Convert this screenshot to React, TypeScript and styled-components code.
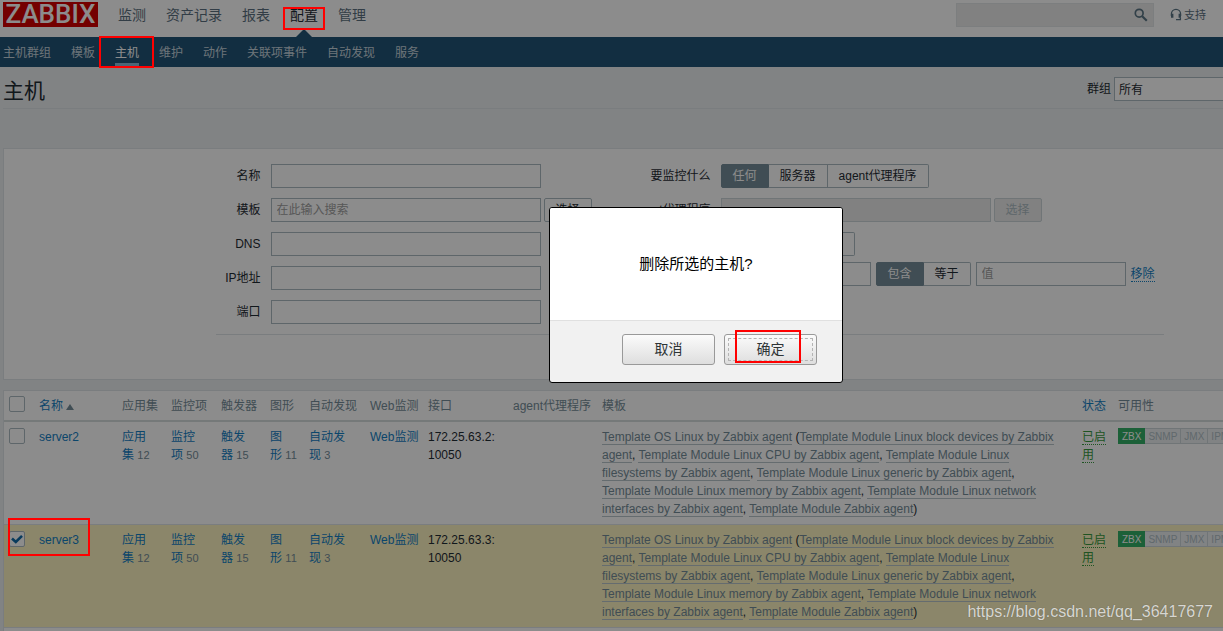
import React from "react";
import styled, { createGlobalStyle } from "styled-components";

const GlobalStyle = createGlobalStyle`
  * { box-sizing: border-box; }
  body {
    margin: 0;
    background: #ebeef0;
    color: #1f2c33;
    font: 12px/18px "Liberation Sans", "Noto Sans CJK SC", sans-serif;
  }
  input, button, select { font: inherit; color: inherit; margin: 0; }
`;

const Page = styled.div`
  position: relative;
  display: flex;
  flex-direction: column;
  min-height: 100vh;
  overflow: hidden;
`;

/* ---------- top bar ---------- */

const Header = styled.header`
  display: flex;
  align-items: flex-start;
  height: 37px;
  padding: 2px 17px 0 3px;
  background: #fff;
`;

const Logo = styled.a`
  width: 95px;
  height: 25px;
  margin-right: 20px;
  background: #d40000;
  color: #fff;
  font-family: Roboto, "Liberation Sans", sans-serif;
  font-size: 26px;
  font-weight: 500;
  line-height: 25px;
  text-align: center;
  text-decoration: none;
`;

const MainNav = styled.nav`
  display: flex;
  gap: 20px;
`;

const MainLink = styled.a<{ $active?: boolean }>`
  position: relative;
  height: 35px;
  font-size: 14px;
  line-height: 26px;
  color: ${(p) => (p.$active ? "#1f2c33" : "#5b7080")};
  text-decoration: none;

  &::after {
    content: "";
    display: ${(p) => (p.$active ? "block" : "none")};
    position: absolute;
    left: 6px;
    bottom: 0;
    border: 8px solid transparent;
    border-top: 0;
    border-bottom-color: #225577;
  }
`;

const HeaderTools = styled.div`
  display: flex;
  align-items: center;
  margin: 1px 0 0 auto;
  height: 24px;
`;

const Search = styled.label`
  display: flex;
  align-items: center;
  width: 198px;
  height: 24px;
  padding-right: 5px;
  margin-right: 16px;
  background: #ebebeb;
  border: 1px solid #e2e5e7;

  input {
    flex: 1;
    min-width: 0;
    border: 0;
    background: none;
  }
`;

const Support = styled.a`
  display: flex;
  align-items: center;
  gap: 2px;
  color: #5b7080;
  font-size: 11px;
  text-decoration: none;
`;

const SubNav = styled.nav`
  display: flex;
  gap: 20px;
  height: 30px;
  padding: 0 3px;
  background: #225577;
`;

const SubLink = styled.a<{ $active?: boolean }>`
  height: 29px;
  line-height: 32px;
  color: ${(p) => (p.$active ? "#fff" : "#c6d3dc")};
  border-bottom: 3px solid ${(p) => (p.$active ? "#8abbd9" : "transparent")};
  text-decoration: none;
`;

/* ---------- content ---------- */

const Content = styled.main`
  flex: 1;
  display: flex;
  flex-direction: column;
  min-width: 1380px;
  padding: 0 4px 0 3px;
`;

const TitleBar = styled.div`
  display: flex;
  align-items: center;
  justify-content: space-between;
  height: 42px;
  padding-top: 3px;
  margin-bottom: 39px;
  border-bottom: 1px solid #dfe4e7;

  h1 {
    margin: 0;
    padding-top: 3px;
    font-size: 21px;
    font-weight: 400;
    line-height: 36px;
  }
`;

const GroupFilter = styled.label`
  display: flex;
  align-items: center;
  gap: 3px;
  line-height: 20px;
`;

const Select = styled.select`
  width: 262px;
  height: 24px;
  padding: 2px 4px 0;
  appearance: none;
  background: #fff;
  border: 1px solid #acbbc2;
  border-radius: 0;
`;

const FilterPanel = styled.section`
  display: flex;
  flex-direction: column;
  align-items: center;
  height: 232px;
  margin-bottom: 10px;
  padding-top: 15px;
  background: #fff;
  border: 1px solid #dfe4e7;
`;

const FilterForm = styled.form`
  width: 948px;
`;

const FilterColumns = styled.div`
  display: flex;
  height: 171px;
  border-bottom: 1px solid #dfe4e7;
`;

const FilterColumn = styled.div<{ $labels: number }>`
  display: grid;
  grid-template-columns: ${(p) => p.$labels}px 1fr;
  grid-auto-rows: minmax(24px, auto);
  gap: 10px;
  align-content: start;
  justify-items: start;
`;

const LeftColumn = styled(FilterColumn)`
  width: 405px;
`;

const FieldLabel = styled.label`
  justify-self: end;
  line-height: 24px;
  white-space: nowrap;
`;

const Controls = styled.div<{ $gap: number }>`
  display: flex;
  gap: ${(p) => p.$gap}px;
  height: 24px;
  white-space: nowrap;
`;

const Stack = styled.div`
  display: grid;
  gap: 6px;
  justify-items: start;
`;

const TextBox = styled.input<{ $short?: boolean }>`
  flex: none;
  width: ${(p) => (p.$short ? 150 : 270)}px;
  height: 24px;
  padding: 0 5px;
  background: #fff;
  border: 1px solid #acbbc2;
  border-radius: 0;

  &::placeholder { color: #a0a0a0; }
  &:disabled { background: #ebebeb; border-color: #ccd5d9; }
`;

const PlainButton = styled.button`
  flex: none;
  width: 48px;
  height: 24px;
  padding: 0;
  background: #fff;
  border: 1px solid #acbbc2;
  border-radius: 2px;

  &:disabled {
    background: #ebebeb;
    border-color: #ccd5d9;
    color: #acbbc2;
  }
`;

const Segments = styled.div<{ $wide?: boolean }>`
  display: flex;
  width: ${(p) => (p.$wide ? "134px" : "auto")};
  height: 24px;
`;

const Segment = styled.button<{ $on?: boolean }>`
  flex: 1 0 auto;
  height: 24px;
  padding: 0 11px;
  border: 1px solid ${(p) => (p.$on ? "#768d99" : "#acbbc2")};
  background: ${(p) => (p.$on ? "#768d99" : "#fff")};
  color: ${(p) => (p.$on ? "#fff" : "#1f2c33")};

  &:first-child { border-radius: 2px 0 0 2px; }
  &:last-child { border-radius: 0 2px 2px 0; }
  &:not(:first-child) { border-left-width: 0; }
`;

const DottedLink = styled.a<{ $green?: boolean }>`
  align-self: center;
  line-height: 14px;
  color: ${(p) => (p.$green ? "#3a9a3f" : "#1480c4")};
  border-bottom: 1px dotted currentColor;
  text-decoration: none;
`;

const StatusLink = styled(DottedLink)`
  line-height: 18px;
`;

const FilterActions = styled.div`
  display: flex;
  justify-content: center;
  gap: 10px;
  padding-top: 10px;
`;

/* ---------- host table ---------- */

const TablePanel = styled.section`
  flex: 1;
  background: #fff;
  border: 1px solid #dfe4e7;
  border-bottom: 0;
`;

const HostTable = styled.table`
  width: 100%;
  table-layout: fixed;
  border-collapse: separate;
  border-spacing: 0;
`;

const Th = styled.th`
  height: 31px;
  padding: 5px 5px 0;
  border-bottom: 2px solid #d5dddd;
  color: #768d99;
  font-weight: 400;
  line-height: 20px;
  text-align: left;
  vertical-align: top;
  white-space: nowrap;
`;

const Row = styled.tr<{ $selected?: boolean }>`
  background: ${(p) => (p.$selected ? "#fdf4c2" : "#fff")};
`;

const Td = styled.td<{ $nowrap?: boolean }>`
  padding: 6px 5px;
  border-bottom: 1px solid #dfe4e7;
  vertical-align: top;
  white-space: ${(p) => (p.$nowrap ? "nowrap" : "normal")};
`;

const TemplatesTd = styled(Td)`
  padding-right: 15px;
`;

const Link = styled.a`
  color: #1480c4;
  text-decoration: none;
`;

const Count = styled.span`
  color: #768d99;
  font-size: 11px;
`;

const TemplateLink = styled.a`
  color: #768d99;
  border-bottom: 1px solid #b8c5cb;
  text-decoration: none;
`;

const SortArrow = styled.span`
  display: inline-block;
  margin-left: 3px;
  border: 4px solid transparent;
  border-top: 0;
  border-bottom: 6px solid #768d99;
`;

const CheckLabel = styled.label`
  position: relative;
  display: block;
  width: 16px;
  height: 16px;

  input {
    display: block;
    width: 16px;
    height: 16px;
    appearance: none;
    background: #fff;
    border: 1px solid #acbbc2;
    border-radius: 2px;
  }

  svg {
    position: absolute;
    inset: 0;
  }
`;

const Badges = styled.div`
  display: flex;
  height: 16px;
`;

const Badge = styled.span<{ $on?: boolean }>`
  height: 16px;
  padding: 0 3px;
  border: 1px solid ${(p) => (p.$on ? "#34af67" : "#ccd5d9")};
  border-left-width: ${(p) => (p.$on ? 1 : 0)}px;
  background: ${(p) => (p.$on ? "#34af67" : "#ebeef0")};
  color: ${(p) => (p.$on ? "#fff" : "#b0bec5")};
  font-size: 10px;
  line-height: 16px;
`;

/* ---------- confirmation ---------- */

const Shade = styled.div`
  position: absolute;
  inset: 0;
  background: rgba(0, 0, 0, 0.45);
`;

const Dialog = styled.div`
  position: absolute;
  left: 549px;
  top: 207px;
  width: 294px;
  background: #f1f1f1;
  border: 1px solid #000;
  border-radius: 3px;
  overflow: hidden;
`;

const Message = styled.p`
  margin: 0;
  height: 113px;
  background: #fff;
  border-bottom: 1px solid #e0e0e0;
  color: #000;
  font-size: 15px;
  line-height: 111px;
  text-align: center;
`;

const DialogActions = styled.div`
  display: flex;
  justify-content: flex-end;
  gap: 9px;
  padding: 13px 25px 17px;
`;

const DialogButton = styled.button`
  width: 93px;
  height: 31px;
  padding: 3px;
  background: linear-gradient(#fbfbfb, #dedede);
  border: 1px solid #999;
  border-radius: 3px;
  color: #2e3436;
  font-size: 14px;
  line-height: 20px;

  span {
    display: block;
    padding-bottom: 1px;
    border: 1px solid transparent;
  }

  &:last-child span { border: 1px dashed #b4b4b4; }
`;

const Mark = styled.div<{ $x: number; $y: number; $w: number; $h: number }>`
  position: absolute;
  left: ${(p) => p.$x}px;
  top: ${(p) => p.$y}px;
  width: ${(p) => p.$w}px;
  height: ${(p) => p.$h}px;
  border: 2px solid #f00;
  pointer-events: none;
`;

const Watermark = styled.div`
  position: absolute;
  right: 10px;
  bottom: 9px;
  color: rgba(255, 255, 255, 0.75);
  font-size: 16px;
  line-height: 20px;
  text-shadow: 0 0 1px rgba(0, 0, 0, 0.35);
`;

const mainMenu = ["监测", "资产记录", "报表", "配置", "管理"];
const subMenu = ["主机群组", "模板", "主机", "维护", "动作", "关联项事件", "自动发现", "服务"];
const columnWidths = [30, 83, 49, 50, 49, 39, 61, 58, 85, 89, 480, 36];
const plainHeads = ["应用集", "监控项", "触发器", "图形", "自动发现", "Web监测", "接口", "agent代理程序", "模板"];
const counters: [string, number][] = [
  ["应用集", 12],
  ["监控项", 50],
  ["触发器", 15],
  ["图形", 11],
  ["自动发现", 3],
];
const linkedTemplates = [
  "Template Module Linux block devices by Zabbix agent",
  "Template Module Linux CPU by Zabbix agent",
  "Template Module Linux filesystems by Zabbix agent",
  "Template Module Linux generic by Zabbix agent",
  "Template Module Linux memory by Zabbix agent",
  "Template Module Linux network interfaces by Zabbix agent",
  "Template Module Zabbix agent",
];
const hosts = [
  { name: "server2", address: "172.25.63.2: 10050", selected: false },
  { name: "server3", address: "172.25.63.3: 10050", selected: true },
];

function Check({ label, checked }: { label: string; checked?: boolean }) {
  return (
    <CheckLabel>
      <input type="checkbox" aria-label={label} defaultChecked={checked} />
      {checked && (
        <svg width="16" height="16" viewBox="0 0 16 16" fill="none" stroke="#0f6aa8" strokeWidth="2.6">
          <path d="M3 7.5 6.8 11 13 4.8" />
        </svg>
      )}
    </CheckLabel>
  );
}

function HostRow({ host }: { host: (typeof hosts)[number] }) {
  return (
    <Row $selected={host.selected}>
      <Td><Check label={host.name} checked={host.selected} /></Td>
      <Td><Link href="#host">{host.name}</Link></Td>
      {counters.map(([name, count]) => (
        <Td key={name}>
          <Link href="#list">{name}</Link>{"\u00a0"}<Count>{count}</Count>
        </Td>
      ))}
      <Td $nowrap><Link href="#web">Web监测</Link></Td>
      <Td>{host.address}</Td>
      <Td />
      <TemplatesTd>
        <TemplateLink href="#template">Template OS Linux by Zabbix agent</TemplateLink>
        {" ("}
        {linkedTemplates.map((name, i) => (
          <React.Fragment key={name}>
            {i > 0 && ", "}
            <TemplateLink href="#template">{name}</TemplateLink>
          </React.Fragment>
        ))}
        {")"}
      </TemplatesTd>
      <Td><StatusLink $green href="#status">已启用</StatusLink></Td>
      <Td>
        <Badges>
          <Badge $on>ZBX</Badge>
          <Badge>SNMP</Badge>
          <Badge>JMX</Badge>
          <Badge>IPMI</Badge>
        </Badges>
      </Td>
    </Row>
  );
}

export default function App() {
  return (
    <Page>
      <GlobalStyle />
      <Header>
        <Logo href="#home">ZABBIX</Logo>
        <MainNav>
          {mainMenu.map((item) => (
            <MainLink key={item} href="#menu" $active={item === "配置"}>{item}</MainLink>
          ))}
        </MainNav>
        <HeaderTools>
          <Search>
            <input type="text" aria-label="搜索" />
            <svg width="14" height="14" viewBox="0 0 14 14" fill="none" stroke="#5b7685">
              <circle cx="5.2" cy="5.2" r="3.9" strokeWidth="1.7" />
              <path d="M8.2 8.2 12.8 12.8" strokeWidth="2.2" />
            </svg>
          </Search>
          <Support href="#support">
            <svg width="12" height="14" viewBox="0 0 12 14" fill="none" stroke="#5b7685">
              <path d="M1.4 8V6a4.6 4.6 0 0 1 9.2 0v2" strokeWidth="1.3" />
              <path d="M2.2 5.8v4M9.8 5.8v4" strokeWidth="2.4" />
              <path d="M10.4 9.5v2.2H6" strokeWidth="1.3" />
            </svg>
            支持
          </Support>
        </HeaderTools>
      </Header>
      <SubNav>
        {subMenu.map((item) => (
          <SubLink key={item} href="#page" $active={item === "主机"}>{item}</SubLink>
        ))}
      </SubNav>

      <Content>
        <TitleBar>
          <h1>主机</h1>
          <GroupFilter>
            群组
            <Select><option>所有</option></Select>
          </GroupFilter>
        </TitleBar>

        <FilterPanel>
          <FilterForm>
            <FilterColumns>
              <LeftColumn $labels={45}>
                <FieldLabel htmlFor="name">名称</FieldLabel>
                <Controls $gap={3}><TextBox id="name" /></Controls>
                <FieldLabel htmlFor="template">模板</FieldLabel>
                <Controls $gap={3}>
                  <TextBox id="template" placeholder="在此输入搜索" />
                  <PlainButton type="button">选择</PlainButton>
                </Controls>
                <FieldLabel htmlFor="dns">DNS</FieldLabel>
                <Controls $gap={3}><TextBox id="dns" /></Controls>
                <FieldLabel htmlFor="ip">IP地址</FieldLabel>
                <Controls $gap={3}><TextBox id="ip" /></Controls>
                <FieldLabel htmlFor="port">端口</FieldLabel>
                <Controls $gap={3}><TextBox id="port" /></Controls>
              </LeftColumn>
              <FilterColumn $labels={90}>
                <FieldLabel as="span">要监控什么</FieldLabel>
                <Segments>
                  <Segment type="button" $on>任何</Segment>
                  <Segment type="button">服务器</Segment>
                  <Segment type="button">agent代理程序</Segment>
                </Segments>
                <FieldLabel htmlFor="proxy">agent代理程序</FieldLabel>
                <Controls $gap={3}>
                  <TextBox id="proxy" disabled />
                  <PlainButton type="button" disabled>选择</PlainButton>
                </Controls>
                <FieldLabel htmlFor="tag">标记</FieldLabel>
                <Stack>
                  <Segments $wide>
                    <Segment type="button" $on>与/或</Segment>
                    <Segment type="button">或</Segment>
                  </Segments>
                  <Controls $gap={5}>
                    <TextBox $short id="tag" />
                    <Segments>
                      <Segment type="button" $on>包含</Segment>
                      <Segment type="button">等于</Segment>
                    </Segments>
                    <TextBox $short aria-label="值" placeholder="值" />
                    <DottedLink href="#remove">移除</DottedLink>
                  </Controls>
                </Stack>
              </FilterColumn>
            </FilterColumns>
            <FilterActions>
              <PlainButton type="button">应用</PlainButton>
              <PlainButton type="button">重设</PlainButton>
            </FilterActions>
          </FilterForm>
        </FilterPanel>

        <TablePanel>
          <HostTable>
            <colgroup>
              {columnWidths.map((width, i) => <col key={i} width={width} />)}
              <col />
            </colgroup>
            <thead>
              <tr>
                <Th><Check label="全选" /></Th>
                <Th><Link href="#sort">名称<SortArrow /></Link></Th>
                {plainHeads.map((head) => <Th key={head}>{head}</Th>)}
                <Th><Link href="#sort">状态</Link></Th>
                <Th>可用性</Th>
              </tr>
            </thead>
            <tbody>
              {hosts.map((host) => <HostRow key={host.name} host={host} />)}
            </tbody>
          </HostTable>
        </TablePanel>
      </Content>

      <Shade />
      <Dialog role="dialog" aria-label="删除所选的主机?">
        <Message>删除所选的主机?</Message>
        <DialogActions>
          <DialogButton type="button"><span>取消</span></DialogButton>
          <DialogButton type="button"><span>确定</span></DialogButton>
        </DialogActions>
      </Dialog>
      <Mark $x={283} $y={7} $w={42} $h={23} />
      <Mark $x={99} $y={36} $w={55} $h={32} />
      <Mark $x={735} $y={330} $w={66} $h={33} />
      <Mark $x={8} $y={518} $w={82} $h={38} />
      <Watermark>https://blog.csdn.net/qq_36417677</Watermark>
    </Page>
  );
}
